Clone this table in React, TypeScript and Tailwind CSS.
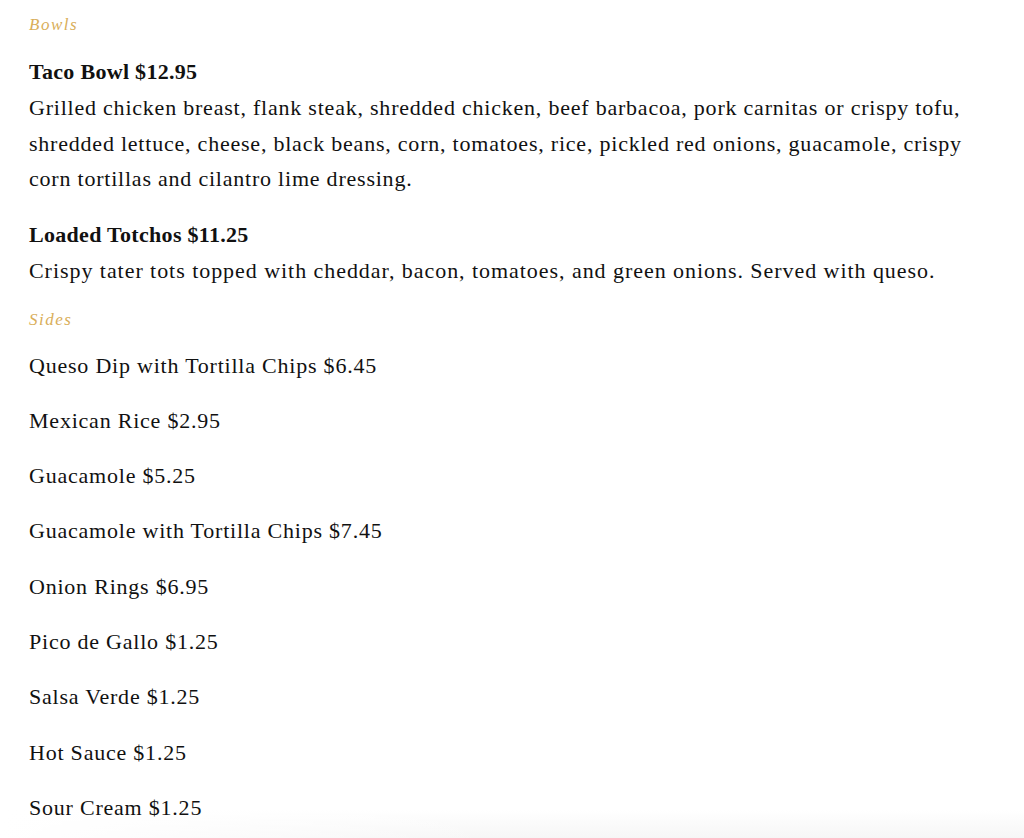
import React from "react";

const sides = [
  "Queso Dip with Tortilla Chips $6.45",
  "Mexican Rice $2.95",
  "Guacamole $5.25",
  "Guacamole with Tortilla Chips $7.45",
  "Onion Rings $6.95",
  "Pico de Gallo $1.25",
  "Salsa Verde $1.25",
  "Hot Sauce $1.25",
  "Sour Cream $1.25",
];

export default function App() {
  return (
    <div className="relative h-[838px] w-[1024px] overflow-hidden bg-white text-[#111]" style={{ fontFamily: '"Liberation Serif", serif' }}>
      <div className="pointer-events-none absolute bottom-0 left-0 right-0 h-[28px] bg-gradient-to-b from-transparent to-[#f6f6f6]" />
      <div className="pointer-events-none absolute bottom-0 left-0 h-[28px] w-[500px] bg-gradient-to-r from-white to-transparent" />
      <div className="relative z-10 px-[29px] pt-[12px]">
        <h2 className="text-[17px] italic leading-[26px] tracking-[1.5px] text-[#d9ae5a]">Bowls</h2>
        <div className="mt-[16px]">
          <h3 className="text-[22px] font-bold leading-[36px] tracking-[0.3px]">Taco Bowl $12.95</h3>
          <p className="text-[22px] leading-[35.5px] tracking-[0.78px]">
            Grilled chicken breast, flank steak, shredded chicken, beef barbacoa, pork carnitas or crispy tofu,<br />
            shredded lettuce, cheese, black beans, corn, tomatoes, rice, pickled red onions, guacamole, crispy<br />
            corn tortillas and cilantro lime dressing.
          </p>
        </div>
        <div className="mt-[20px]">
          <h3 className="text-[22px] font-bold leading-[36px] tracking-[0.3px]">Loaded Totchos $11.25</h3>
          <p className="text-[22px] leading-[35.5px] tracking-[0.95px]">
            Crispy tater tots topped with cheddar, bacon, tomatoes, and green onions. Served with queso.
          </p>
        </div>
        <h2 className="mt-[18.5px] text-[17px] italic leading-[26px] tracking-[1.5px] text-[#d9ae5a]">Sides</h2>
        <ul className="mt-[18px] flex flex-col gap-[25.3px]">
          {sides.map((s) => (
            <li key={s} className="text-[22px] leading-[30px] tracking-[0.78px]">{s}</li>
          ))}
        </ul>
      </div>
    </div>
  );
}
